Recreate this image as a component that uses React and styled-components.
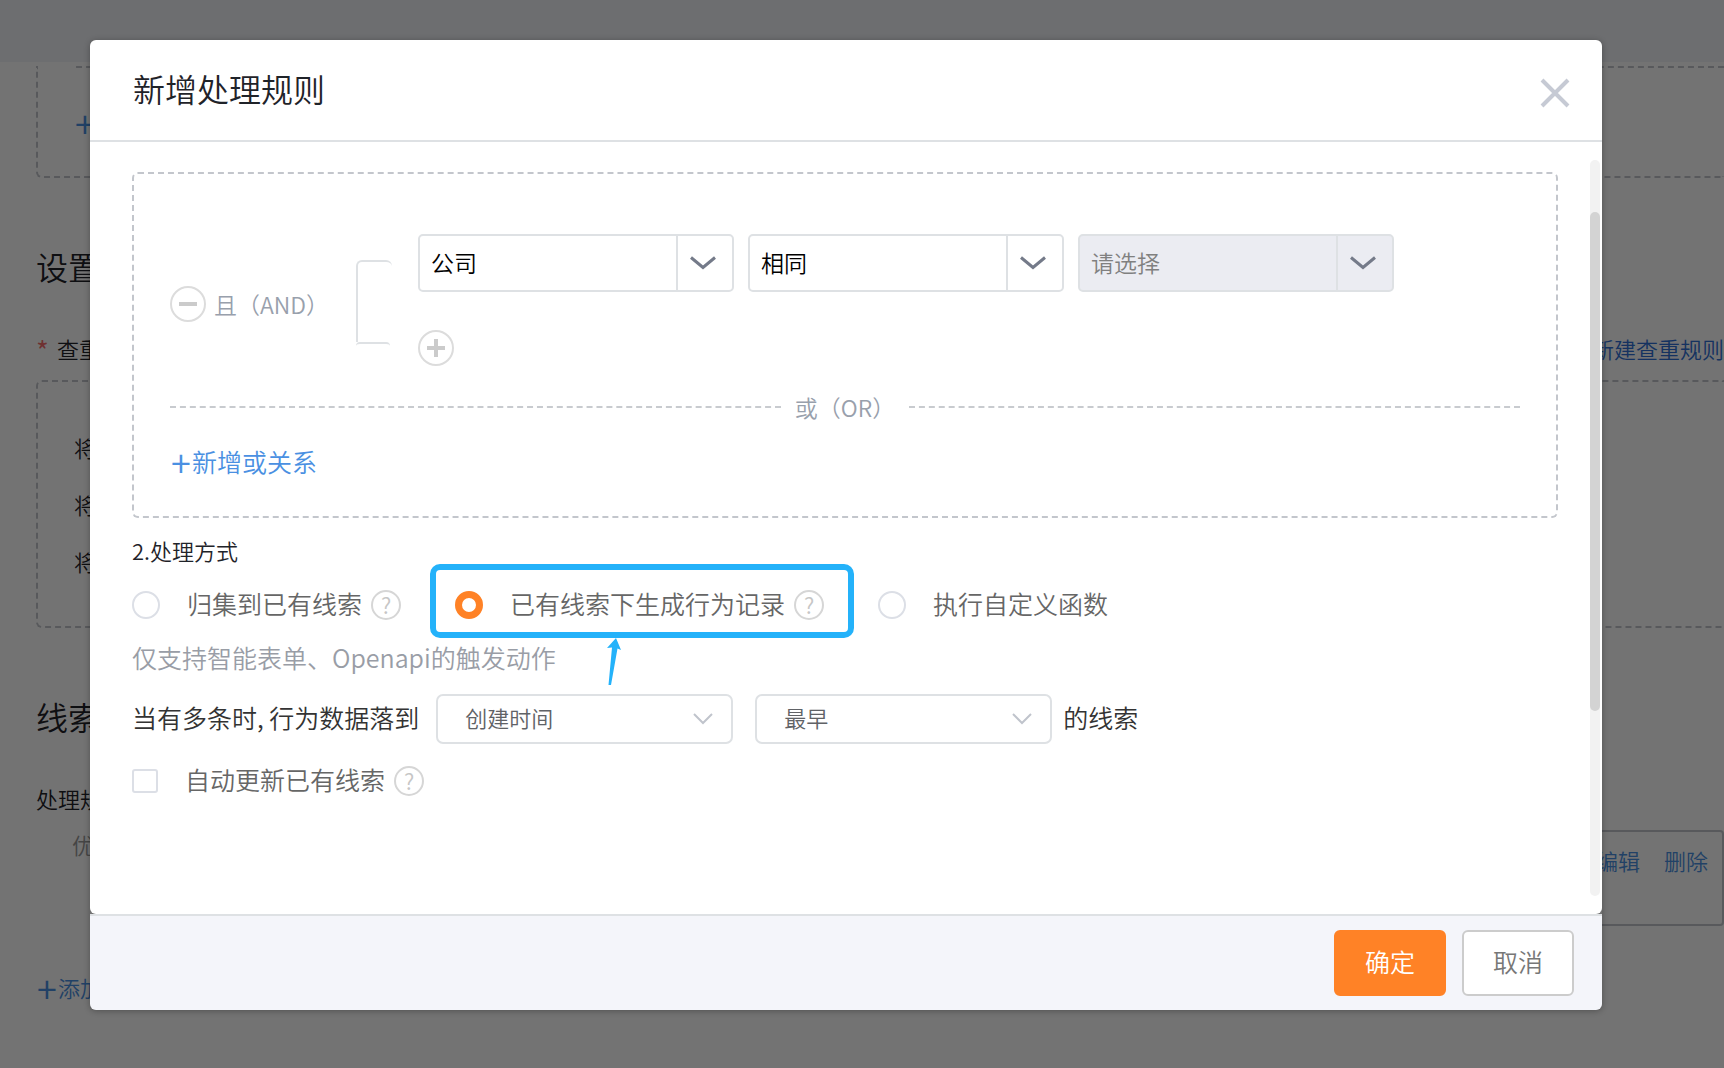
import React, { useState } from "react";
import styled, { createGlobalStyle, css } from "styled-components";

const colors = {
  link: "#4a90e2",
  deepLink: "#2f6fd6",
  ink: "#1f2329",
  dash: "#c3c6cc",
  line: "#dee1e4",
  orange: "#ff8226",
  mark: "#24b2fa",
};

const GlobalStyle = createGlobalStyle`
  * { box-sizing: border-box; }
  body {
    margin: 0;
    background: #fff;
    font-family: "Noto Sans CJK SC", "Noto Sans", sans-serif;
    font-size: 22px;
    font-weight: 350;
    line-height: 34px;
    color: ${colors.ink};
  }
  button, select, input { font: inherit; margin: 0; }
  h1, h2, h3, p { margin: 0; font-weight: inherit; }
  a { text-decoration: none; }
`;

const Root = styled.div`
  position: relative;
  min-height: 100vh;
  overflow: hidden;
`;

/* ---------- settings page behind the dialog ---------- */

const Page = styled.main`
  min-height: 100vh;
`;

const TopBar = styled.header`
  height: 62px;
  background: #f2f4f9;
`;

const Settings = styled.div`
  padding: 4px 0 0 36px;
`;

const DashedPanel = styled.section`
  position: relative;
  display: flex;
  flex-direction: column;
  border: 2px dashed ${colors.dash};
  border-right: none;
  border-radius: 6px 0 0 6px;
  padding: ${(p) => (p.$list ? "48px 36px" : "37px 36px")};
  gap: 23px;
  ${(p) =>
    !p.$list &&
    css`
      border-top-left-radius: 0;
      &::before {
        content: "";
        position: absolute;
        top: -2px;
        left: 0;
        width: 36px;
        height: 2px;
        background: #fff;
      }
    `}
`;

const PageTitle = styled.h2`
  margin-top: 66px;
  font-size: 32px;
  line-height: 44px;
`;

const FieldRow = styled.div`
  display: flex;
  justify-content: space-between;
  height: 34px;
  margin: 43px 0 15px;
`;

const FieldName = styled.span`
  display: flex;
  gap: 8px;
`;

const Required = styled.span`
  color: #f56c6c;
  font-size: 28px;
  line-height: 38px;
`;

const PageLink = styled.a`
  color: ${(p) => (p.$deep ? colors.deepLink : colors.link)};
`;

const RuleRow = styled.div`
  display: flex;
  gap: 40px;
  padding-left: 36px;
  margin-bottom: 44px;
  color: #999;
  line-height: 28px;
`;

const RuleCard = styled.div`
  flex: 1;
  display: flex;
  justify-content: flex-end;
  gap: 24px;
  height: 96px;
  padding: 14px 14px;
  border: 2px solid ${colors.dash};
  border-radius: 4px;
`;

const AddButton = styled.button`
  display: flex;
  align-items: center;
  height: 34px;
  padding: 0;
  border: none;
  background: none;
  color: ${colors.link};
  font-size: ${(p) => (p.$large ? "25px" : "22px")};
  line-height: 34px;
`;

const PlusSign = styled.span`
  width: 22px;
  font-size: 36px;
  text-align: center;
`;

/* ---------- dialog ---------- */

const Overlay = styled.div`
  position: absolute;
  inset: 0;
  display: flex;
  padding: 40px 122px 58px 90px;
  background: rgba(0, 0, 0, 0.55);
`;

const Dialog = styled.div`
  flex: 1;
  display: flex;
  flex-direction: column;
  border-radius: 6px;
  box-shadow: 0 1px 6px rgba(0, 0, 0, 0.3);
`;

const Panel = styled.div`
  flex: 1;
  display: flex;
  flex-direction: column;
  min-height: 0;
  border-radius: 6px;
  background: #fff;
`;

const DialogHeader = styled.header`
  display: flex;
  align-items: center;
  justify-content: space-between;
  height: 102px;
  padding: 0 32px 4px 43px;
  border-bottom: 2px solid ${colors.line};
`;

const DialogTitle = styled.h1`
  font-size: 32px;
  line-height: 44px;
`;

const CloseButton = styled.button`
  display: flex;
  padding: 10px 0 0;
  border: none;
  background: none;
  color: #c6cad4;
`;

const DialogBody = styled.div`
  flex: 1;
  display: flex;
  min-height: 0;
`;

const Content = styled.div`
  flex: 1;
  min-width: 0;
  padding: 30px 32px 0 42px;
`;

const ScrollTrack = styled.div`
  width: 10px;
  margin: 18px 2px 18px 0;
  padding-top: 52px;
  border-radius: 5px;
  background: #f2f2f2;
`;

const ScrollThumb = styled.div`
  height: 73%;
  border-radius: 5px;
  background: #d3d3d3;
`;

const ConditionBox = styled.section`
  padding: 60px 36px 38px;
  border: 2px dashed ${colors.dash};
  border-radius: 6px;
`;

const Condition = styled.div`
  display: flex;
`;

const ConditionLabel = styled.div`
  display: flex;
  align-items: center;
  gap: 8px;
  width: 186px;
  padding-top: 8px;
  color: #98a0ac;
  font-size: 23px;
`;

const RoundButton = styled.button`
  display: flex;
  flex: none;
  align-items: center;
  justify-content: center;
  width: 36px;
  height: 36px;
  padding: 0;
  border: 2px solid #dcdcdc;
  border-radius: 50%;
  background: none;
  color: #cbcbcb;
`;

const Bracket = styled.div`
  width: 62px;
  padding-top: 26px;
`;

const BracketTop = styled.div`
  width: 36px;
  height: 82px;
  border: 2px solid ${colors.line};
  border-width: 2px 0 0 2px;
  border-radius: 6px 6px 0 0;
`;

const BracketBottom = styled.div`
  width: 34px;
  height: 8px;
  border-top: 2px solid ${colors.line};
  border-radius: 6px;
`;

const ConditionFields = styled.div`
  display: flex;
  flex-direction: column;
  gap: 38px;
`;

const Fields = styled.div`
  display: flex;
  gap: 14px;
`;

const SelectWrap = styled.span`
  position: relative;
  display: flex;
`;

const selectBase = css`
  appearance: none;
  border: 2px solid ${colors.line};
  background: #fff;
`;

const ConditionSelect = styled.select`
  ${selectBase}
  width: 316px;
  height: 58px;
  padding: 0 60px 2px 11px;
  border-radius: 5px;
  color: #000;
  font-size: 23px;
  &:disabled {
    background: #ebecf2;
    color: #808080;
    opacity: 1;
  }
`;

const ConditionArrow = styled.span`
  position: absolute;
  top: 2px;
  right: 2px;
  bottom: 2px;
  display: flex;
  align-items: center;
  justify-content: center;
  width: 56px;
  padding-right: 4px;
  border-left: 2px solid ${colors.line};
  color: #747a89;
  pointer-events: none;
`;

const TargetSelect = styled.select`
  ${selectBase}
  width: 297px;
  height: 50px;
  padding: 0 50px 4px 27px;
  border-radius: 7px;
  color: #606266;
`;

const TargetArrow = styled.span`
  position: absolute;
  top: 0;
  right: 20px;
  bottom: 0;
  display: flex;
  align-items: center;
  color: #c0c4cc;
  pointer-events: none;
`;

const OrDivider = styled.div`
  display: flex;
  align-items: center;
  gap: 14px;
  margin: 24px 0 20px;
  color: #98a0ac;
  font-size: 23px;
  &::before,
  &::after {
    content: "";
    flex: 1;
    border-top: 2px dashed #c8cbcf;
  }
`;

const StepTitle = styled.h3`
  margin: 15px 0 21px;
  font-size: 22px;
  line-height: 34px;
`;

const Options = styled.div`
  display: flex;
  gap: 54px;
`;

const Option = styled.div`
  position: relative;
  display: flex;
  align-items: center;
  color: #666;
  font-size: 25px;
`;

const Label = styled.label`
  margin: 0 9px 0 27px;
  padding-bottom: 4px;
  line-height: 30px;
`;

const Radio = styled.input`
  appearance: none;
  width: 28px;
  height: 28px;
  border: 2px solid #dcdfe6;
  border-radius: 50%;
  background: #fff;
  &:checked {
    border: 7px solid ${colors.orange};
  }
`;

const Checkbox = styled.input`
  appearance: none;
  width: 26px;
  height: 24px;
  border: 2px solid #dcdfe6;
  border-radius: 3px;
  background: #fff;
`;

const HelpButton = styled.button`
  display: flex;
  align-items: center;
  justify-content: center;
  width: 30px;
  height: 30px;
  padding: 0 0 2px;
  border: 2px solid #d6d6d6;
  border-radius: 50%;
  background: none;
  color: #c6c6c6;
  font-size: 22px;
`;

const Highlight = styled.span`
  position: absolute;
  inset: -24px -30px -16px -25px;
  border: 6px solid ${colors.mark};
  border-radius: 10px;
  pointer-events: none;
`;

const Pointer = styled.svg`
  position: absolute;
  top: 50px;
  left: 151px;
  pointer-events: none;
`;

const Hint = styled.p`
  margin: 18px 0 20px;
  color: #999da6;
  font-size: 25px;
`;

const TargetLine = styled.div`
  display: flex;
  align-items: center;
  margin-bottom: 20px;
  color: #333;
  font-size: 25px;
`;

const TargetText = styled.span`
  padding-bottom: 4px;
`;

const TargetFields = styled.div`
  display: flex;
  gap: 22px;
  margin: 0 11px 0 17px;
  font-size: 22px;
`;

const DialogFooter = styled.footer`
  display: flex;
  justify-content: flex-end;
  gap: 16px;
  padding: 14px 28px;
  border-top: 2px solid ${colors.line};
  border-radius: 0 0 6px 6px;
  background: #f4f5fa;
`;

const FooterButton = styled.button`
  width: 112px;
  height: 66px;
  padding: 0 0 4px;
  border: 2px solid ${(p) => (p.$primary ? colors.orange : "#ccc")};
  border-radius: 6px;
  background: ${(p) => (p.$primary ? colors.orange : "#fff")};
  color: ${(p) => (p.$primary ? "#fff" : "#777")};
  font-size: 25px;
`;

function WideChevron() {
  return (
    <svg width="26" height="14" viewBox="0 0 26 14" fill="none" stroke="currentColor" strokeWidth="3">
      <path d="M1 1.5 L13 11.5 L25 1.5" />
    </svg>
  );
}

function ThinChevron() {
  return (
    <svg width="20" height="12" viewBox="0 0 20 12" fill="none" stroke="currentColor" strokeWidth="2">
      <path d="M1 1 L10 10 L19 1" />
    </svg>
  );
}

function ConditionField({ label, value, disabled }) {
  return (
    <SelectWrap>
      <ConditionSelect aria-label={label} disabled={disabled}>
        <option>{value}</option>
      </ConditionSelect>
      <ConditionArrow>
        <WideChevron />
      </ConditionArrow>
    </SelectWrap>
  );
}

function TargetField({ label, value }) {
  return (
    <SelectWrap>
      <TargetSelect aria-label={label}>
        <option>{value}</option>
      </TargetSelect>
      <TargetArrow>
        <ThinChevron />
      </TargetArrow>
    </SelectWrap>
  );
}

function Help() {
  return <HelpButton type="button">?</HelpButton>;
}

function SettingsPage() {
  return (
    <Page>
      <TopBar />
      <Settings>
        <DashedPanel>
          <AddButton type="button">
            <PlusSign>+</PlusSign>
          </AddButton>
        </DashedPanel>
        <PageTitle>设置</PageTitle>
        <FieldRow>
          <FieldName>
            <Required>*</Required>查重
          </FieldName>
          <PageLink $deep href="#new-rule">
            新建查重规则
          </PageLink>
        </FieldRow>
        <DashedPanel $list>
          <span>将</span>
          <span>将</span>
          <span>将</span>
        </DashedPanel>
        <PageTitle>线索</PageTitle>
        <FieldRow>处理规</FieldRow>
        <RuleRow>
          <span>优</span>
          <RuleCard>
            <PageLink href="#edit">编辑</PageLink>
            <PageLink href="#delete">删除</PageLink>
          </RuleCard>
        </RuleRow>
        <AddButton type="button">
          <PlusSign>+</PlusSign>添加
        </AddButton>
      </Settings>
    </Page>
  );
}

export default function App() {
  const [mode, setMode] = useState("record");
  const radio = (id) => ({
    type: "radio",
    name: "mode",
    id,
    checked: mode === id,
    onChange: () => setMode(id),
  });

  return (
    <Root>
      <GlobalStyle />
      <SettingsPage />
      <Overlay>
        <Dialog role="dialog" aria-labelledby="dialog-title">
          <Panel>
            <DialogHeader>
              <DialogTitle id="dialog-title">新增处理规则</DialogTitle>
              <CloseButton type="button" aria-label="关闭">
                <svg width="30" height="30" viewBox="0 0 30 30" stroke="currentColor" strokeWidth="4">
                  <path d="M2 2 L28 28 M28 2 L2 28" />
                </svg>
              </CloseButton>
            </DialogHeader>
            <DialogBody>
              <Content>
                <ConditionBox>
                  <Condition>
                    <ConditionLabel>
                      <RoundButton type="button" aria-label="删除条件">
                        <svg width="18" height="18" viewBox="0 0 18 18" stroke="currentColor" strokeWidth="4">
                          <path d="M0 9 H18" />
                        </svg>
                      </RoundButton>
                      且（AND）
                    </ConditionLabel>
                    <Bracket>
                      <BracketTop />
                      <BracketBottom />
                    </Bracket>
                    <ConditionFields>
                      <Fields>
                        <ConditionField label="字段" value="公司" />
                        <ConditionField label="关系" value="相同" />
                        <ConditionField label="值" value="请选择" disabled />
                      </Fields>
                      <RoundButton type="button" aria-label="新增条件">
                        <svg width="18" height="18" viewBox="0 0 18 18" stroke="currentColor" strokeWidth="4">
                          <path d="M0 9 H18 M9 0 V18" />
                        </svg>
                      </RoundButton>
                    </ConditionFields>
                  </Condition>
                  <OrDivider>或（OR）</OrDivider>
                  <AddButton type="button" $large>
                    <PlusSign>+</PlusSign>新增或关系
                  </AddButton>
                </ConditionBox>

                <StepTitle>2.处理方式</StepTitle>
                <Options>
                  <Option>
                    <Radio {...radio("merge")} />
                    <Label htmlFor="merge">归集到已有线索</Label>
                    <Help />
                  </Option>
                  <Option>
                    <Radio {...radio("record")} />
                    <Label htmlFor="record">已有线索下生成行为记录</Label>
                    <Help />
                    <Highlight />
                    <Pointer width="16" height="48" viewBox="0 0 16 48" fill={colors.mark}>
                      <path d="M10 0 L15 12 L11.5 10.5 L5 47 L2.5 47 L6 9.5 L1 10 Z" />
                    </Pointer>
                  </Option>
                  <Option>
                    <Radio {...radio("custom")} />
                    <Label htmlFor="custom">执行自定义函数</Label>
                  </Option>
                </Options>
                <Hint>仅支持智能表单、Openapi的触发动作</Hint>
                <TargetLine>
                  <TargetText>当有多条时, 行为数据落到</TargetText>
                  <TargetFields>
                    <TargetField label="排序字段" value="创建时间" />
                    <TargetField label="排序方式" value="最早" />
                  </TargetFields>
                  <TargetText>的线索</TargetText>
                </TargetLine>
                <Option>
                  <Checkbox type="checkbox" id="auto-update" />
                  <Label htmlFor="auto-update">自动更新已有线索</Label>
                  <Help />
                </Option>
              </Content>
              <ScrollTrack>
                <ScrollThumb />
              </ScrollTrack>
            </DialogBody>
          </Panel>
          <DialogFooter>
            <FooterButton type="button" $primary>
              确定
            </FooterButton>
            <FooterButton type="button">取消</FooterButton>
          </DialogFooter>
        </Dialog>
      </Overlay>
    </Root>
  );
}
